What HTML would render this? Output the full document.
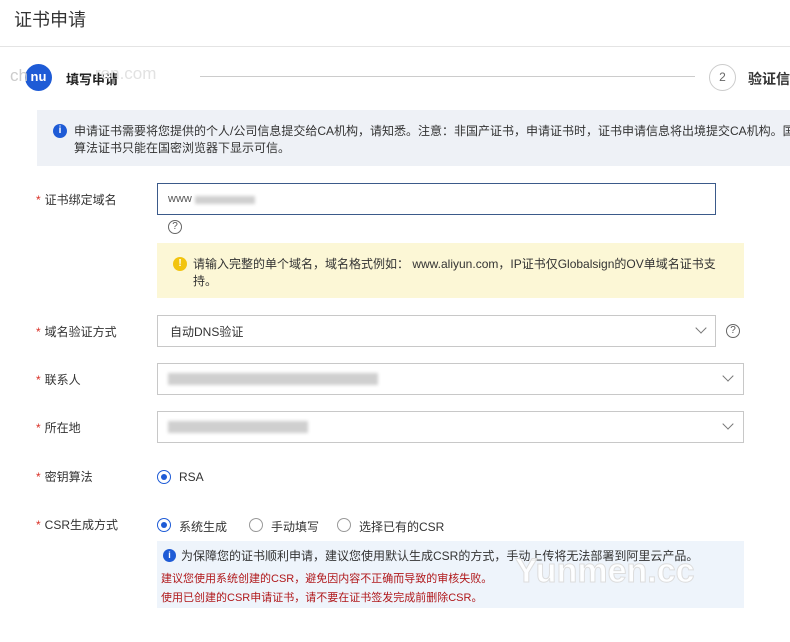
<!DOCTYPE html>
<html><head><meta charset="utf-8"><style>
*{margin:0;padding:0;box-sizing:border-box}
body{width:790px;height:642px;background:#fff;font-family:"Liberation Sans","Noto Sans CJK SC",sans-serif;color:#333;position:relative;overflow:hidden;font-size:12px}
.a{position:absolute;white-space:nowrap}
.lbl{position:absolute;left:36px;font-size:12px;color:#333}
.lbl b{color:#d93026;font-weight:normal;margin-right:4px}
.box{position:absolute;border:1px solid #c8c8c8;background:#fff}
.chev{position:absolute;width:8px;height:8px;border-right:1.3px solid #777;border-bottom:1.3px solid #777;transform:rotate(45deg)}
.q{position:absolute;width:14px;height:14px;border:1.2px solid #666;border-radius:50%;font-size:10px;line-height:12px;text-align:center;color:#555}
.rad{position:absolute;width:14px;height:14px;border:1px solid #999;border-radius:50%}
.rad.on{border-color:#1e5bd6}
.rad.on::after{content:"";position:absolute;left:3px;top:3px;width:6px;height:6px;border-radius:50%;background:#1e5bd6}
.blur{position:absolute;background:#bbb;filter:blur(1.5px);opacity:.7}
</style></head><body>
<div class="a" style="left:14px;top:6px;font-size:18px;color:#333">证书申请</div>
<div class="a" style="left:0;top:46px;width:790px;height:1px;background:#e4e4e4"></div>
<div class="a" style="left:25px;top:64px;width:27px;height:27px;border-radius:50%;background:#1e5bd6;color:#fff;font-size:13px;font-weight:bold;text-align:center;line-height:26px">nu</div>
<div class="a" style="left:10px;top:66px;font-size:17px;color:#ccc">ch</div>
<div class="a" style="left:66px;top:69px;font-size:13px;color:#222;font-weight:bold">填写申请</div>
<div class="a" style="left:95px;top:64px;font-size:17px;color:#e2e2e2">ren.com</div>
<div class="a" style="left:200px;top:76px;width:495px;height:1px;background:#ccc"></div>
<div class="a" style="left:709px;top:64px;width:27px;height:27px;border-radius:50%;border:1px solid #ccc;text-align:center;line-height:25px;color:#666;font-size:12px">2</div>
<div class="a" style="left:748px;top:69px;font-size:14px;font-weight:bold;color:#333">验证信</div>

<div class="a" style="left:37px;top:110px;width:753px;height:56px;background:#eef1f6"></div>
<div class="a" style="left:53px;top:124px;width:14px;height:14px;border-radius:50%;background:#1e5bd6;color:#fff;font-size:10px;font-weight:bold;text-align:center;line-height:14px">i</div>
<div class="a" style="left:74px;top:123px;font-size:12px;line-height:17px;color:#333">申请证书需要将您提供的个人/公司信息提交给CA机构，请知悉。注意：非国产证书，申请证书时，证书申请信息将出境提交CA机构。国<br>算法证书只能在国密浏览器下显示可信。</div>

<div class="lbl" style="top:191px"><b>*</b>证书绑定域名</div>
<div class="box" style="left:157px;top:183px;width:559px;height:32px;border-color:#3b5a8a"></div>
<div class="a" style="left:168px;top:193px;font-size:11px;color:#555">www</div>
<div class="blur" style="left:195px;top:196px;width:60px;height:8px"></div>
<div class="q" style="left:168px;top:220px">?</div>

<div class="a" style="left:157px;top:243px;width:587px;height:55px;background:#fcf7d6"></div>
<div class="a" style="left:173px;top:257px;width:14px;height:14px;border-radius:50%;background:#f2c40f;color:#fff;font-size:10px;font-weight:bold;text-align:center;line-height:14px">!</div>
<div class="a" style="left:193px;top:256px;font-size:12px;line-height:17px;color:#333">请输入完整的单个域名，域名格式例如： www.aliyun.com，IP证书仅Globalsign的OV单域名证书支<br>持。</div>

<div class="lbl" style="top:323px"><b>*</b>域名验证方式</div>
<div class="box" style="left:157px;top:315px;width:559px;height:32px"></div>
<div class="a" style="left:170px;top:323px;font-size:12px">自动DNS验证</div>
<div class="chev" style="left:697px;top:324px"></div>
<div class="q" style="left:726px;top:324px">?</div>

<div class="lbl" style="top:371px"><b>*</b>联系人</div>
<div class="box" style="left:157px;top:363px;width:587px;height:32px"></div>
<div class="blur" style="left:168px;top:373px;width:210px;height:12px"></div>
<div class="chev" style="left:724px;top:372px"></div>

<div class="lbl" style="top:419px"><b>*</b>所在地</div>
<div class="box" style="left:157px;top:411px;width:587px;height:32px"></div>
<div class="blur" style="left:168px;top:421px;width:140px;height:12px"></div>
<div class="chev" style="left:724px;top:420px"></div>

<div class="lbl" style="top:468px"><b>*</b>密钥算法</div>
<div class="rad on" style="left:157px;top:470px"></div>
<div class="a" style="left:179px;top:470px;font-size:12px">RSA</div>

<div class="lbl" style="top:516px"><b>*</b>CSR生成方式</div>
<div class="rad on" style="left:157px;top:518px"></div>
<div class="a" style="left:179px;top:518px">系统生成</div>
<div class="rad" style="left:249px;top:518px"></div>
<div class="a" style="left:271px;top:518px">手动填写</div>
<div class="rad" style="left:337px;top:518px"></div>
<div class="a" style="left:359px;top:518px">选择已有的CSR</div>

<div class="a" style="left:157px;top:541px;width:587px;height:67px;background:#eef4fb"></div>
<div class="a" style="left:163px;top:549px;width:13px;height:13px;border-radius:50%;background:#1e5bd6;color:#fff;font-size:9px;font-weight:bold;text-align:center;line-height:13px">i</div>
<div class="a" style="left:181px;top:547px;font-size:12px;color:#333">为保障您的证书顺利申请，建议您使用默认生成CSR的方式，手动上传将无法部署到阿里云产品。</div>
<div class="a" style="left:161px;top:570px;font-size:11px;line-height:19px;color:#b0181b">建议您使用系统创建的CSR，避免因内容不正确而导致的审核失败。<br>使用已创建的CSR申请证书，请不要在证书签发完成前删除CSR。</div>
<div class="a" style="left:515px;top:552px;font-size:34px;font-weight:bold;color:rgba(255,255,255,.85);-webkit-text-stroke:1px #ddd">Yunmen.cc</div>
</body></html>
